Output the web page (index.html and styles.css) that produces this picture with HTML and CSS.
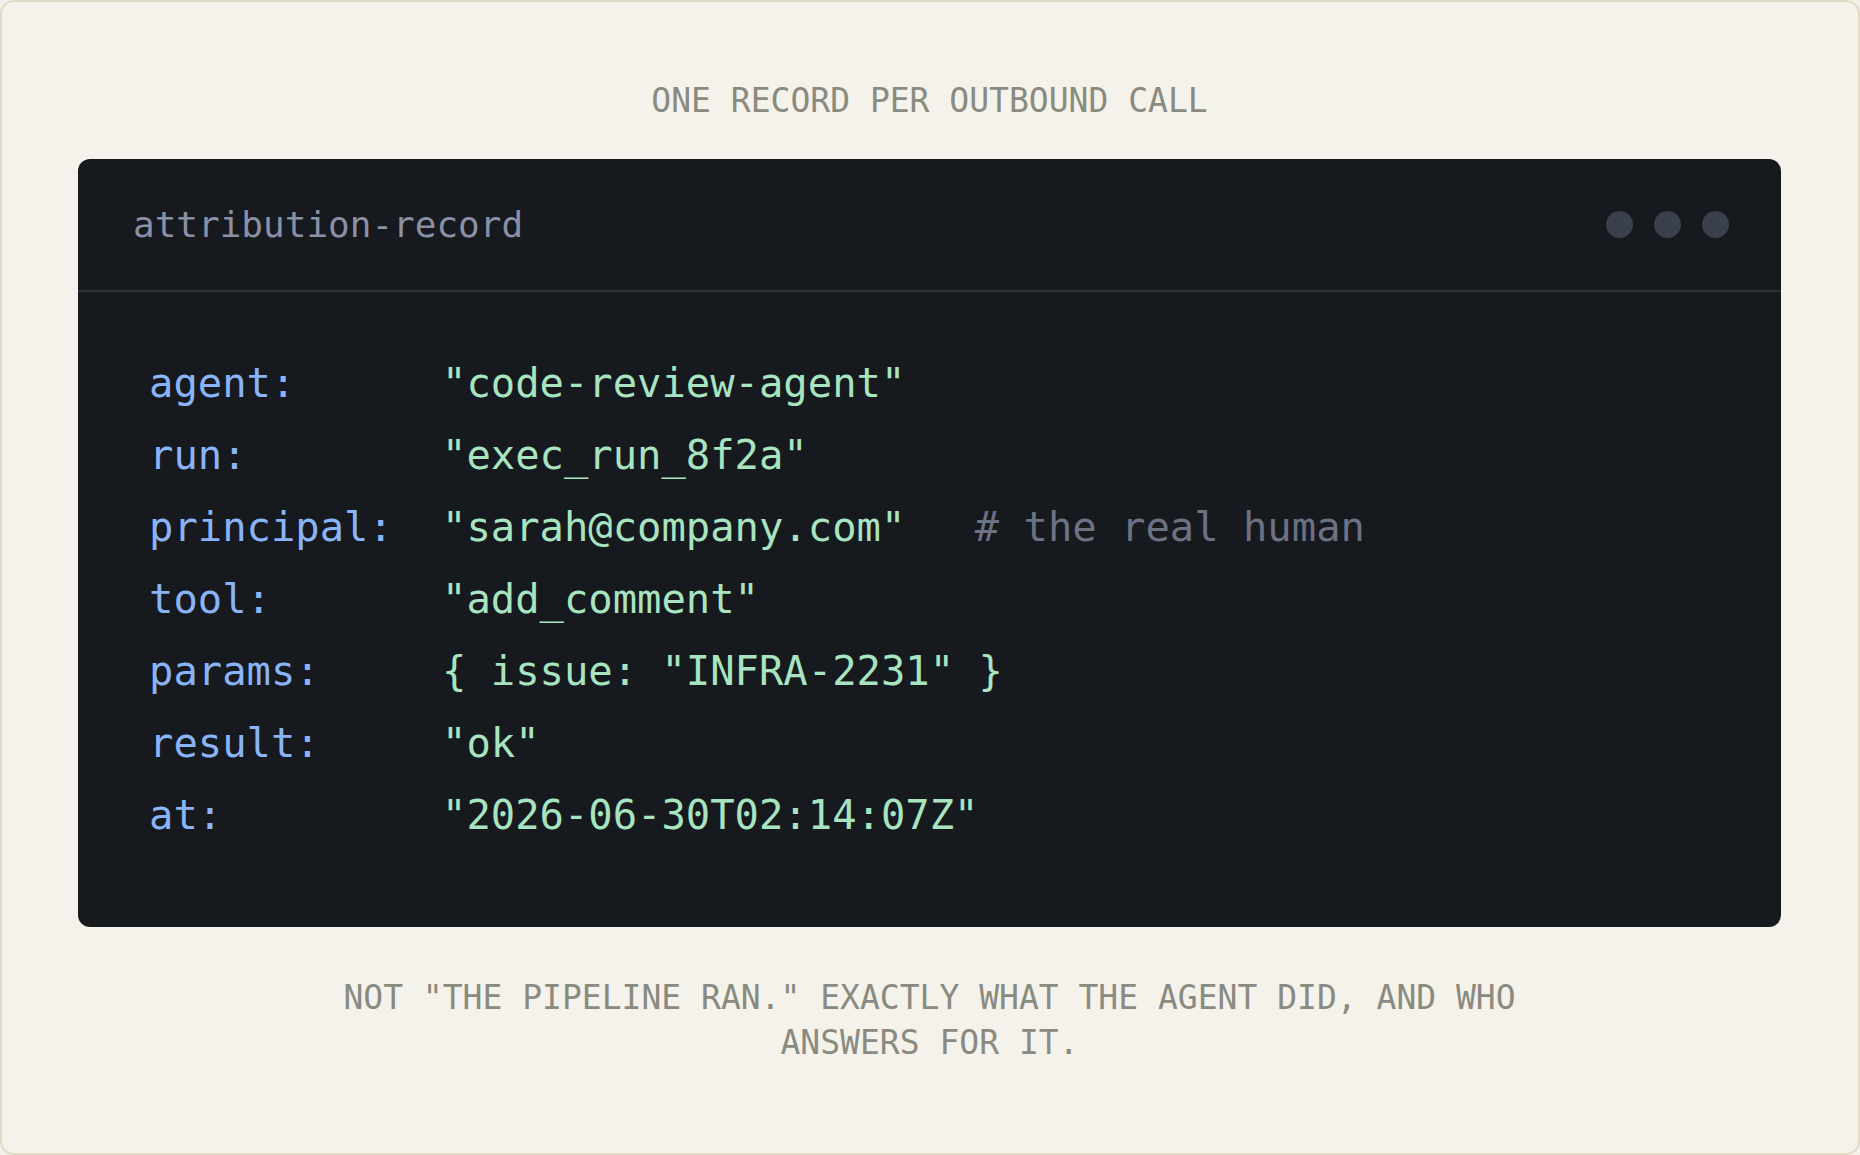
FILE: index.html
```html
<!DOCTYPE html>
<html lang="en">
<head>
<meta charset="utf-8">
<title>Attribution record</title>
<link rel="stylesheet" href="styles.css">
</head>
<body>
<div class="frame">
  <div class="label title">ONE RECORD PER OUTBOUND CALL</div>
  <div class="card">
    <div class="card-head">
      <span class="card-name">attribution-record</span>
      <div class="dots"><span class="dot"></span><span class="dot"></span><span class="dot"></span></div>
    </div>
    <div class="card-body">
      <div class="row"><span class="key">agent:</span><span class="val">"code-review-agent"</span></div>
      <div class="row"><span class="key">run:</span><span class="val">"exec_run_8f2a"</span></div>
      <div class="row"><span class="key">principal:</span><span class="val">"sarah@company.com"<span class="comment"># the real human</span></span></div>
      <div class="row"><span class="key">tool:</span><span class="val">"add_comment"</span></div>
      <div class="row"><span class="key">params:</span><span class="val">{ issue: "INFRA-2231" }</span></div>
      <div class="row"><span class="key">result:</span><span class="val">"ok"</span></div>
      <div class="row"><span class="key">at:</span><span class="val">"2026-06-30T02:14:07Z"</span></div>
    </div>
  </div>
  <div class="label caption">NOT "THE PIPELINE RAN." EXACTLY WHAT THE AGENT DID, AND WHO ANSWERS FOR IT.</div>
</div>
</body>
</html>
```
FILE: styles.css
```css
* { box-sizing: border-box; }
html, body { margin: 0; padding: 0; }
body {
  width: 1860px;
  height: 1155px;
  background: #f5f1ea;
  font-family: "DejaVu Sans Mono", "Liberation Mono", monospace;
}
.frame {
  width: 1860px;
  height: 1155px;
  border: 2px solid #e1dbc7;
  border-radius: 14px;
  background: #f5f2eb;
  padding: 79px 77px 0 76px;
  display: flex;
  flex-direction: column;
  align-items: center;
}
.label {
  color: #8a8b80;
  font-size: 33px;
  text-align: center;
  white-space: pre-wrap;
}
.title {
  line-height: 40px;
  margin-bottom: 38px;
}
.card {
  width: 100%;
  background: #16191e;
  border-radius: 12px;
  overflow: hidden;
}
.card-head {
  height: 133px;
  border-bottom: 2px solid #2b2f38;
  display: flex;
  align-items: center;
  justify-content: space-between;
  padding: 0 52px 0 55px;
}
.card-name {
  color: #8a90a5;
  font-size: 36px;
  line-height: 40px;
}
.dots {
  display: flex;
  gap: 21px;
}
.dot {
  width: 27px;
  height: 27px;
  border-radius: 50%;
  background: #3b404e;
}
.card-body {
  padding: 55px 0 76px 71px;
  font-size: 40.5px;
  line-height: 72px;
}
.row {
  display: grid;
  grid-template-columns: 293px auto;
  white-space: pre;
}
.key { color: #8ab4f8; }
.val { color: #a8e4c0; }
.comment {
  color: #6c7183;
  margin-left: 2.85ch;
}
.caption {
  margin-top: 48px;
  line-height: 45px;
  max-width: 1240px;
}
```
